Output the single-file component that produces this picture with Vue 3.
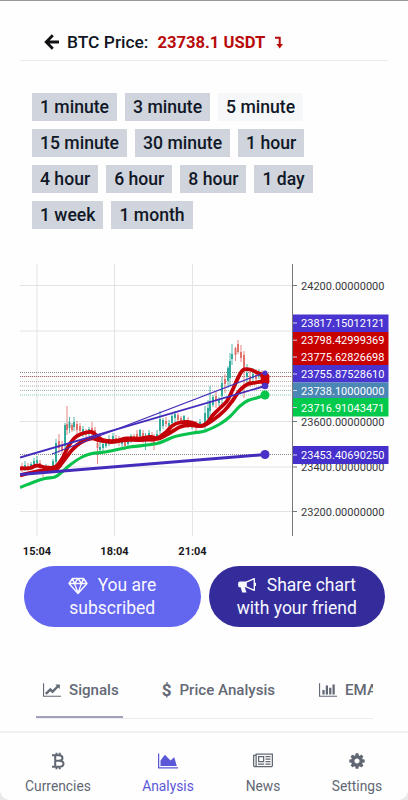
<template>
  <div class="screen">
    <header class="header">
      <svg class="back" viewBox="0 0 16 16"><path d="M8.8 1.2 2.2 8l6.600 6.800M2.400 8H15" /></svg>
      <span class="pair">BTC Price:</span>
      <span class="price">23738.1 USDT</span>
      <svg class="down" viewBox="0 0 10 13">
        <path d="M1 1.700H5.700V9" />
        <polygon points="2.400,8 9,8 5.700,12.600" />
      </svg>
    </header>

    <!-- timeframes -->
    <div class="frames">
      <div v-for="(row, i) in frames" :key="i" class="frame-row">
        <button v-for="f in row" :key="f" class="frame" :class="{ active: frame === f }" @click="frame = f">{{ f }}</button>
      </div>
    </div>

    <!-- chart -->
    <svg class="chart" viewBox="20 264 372 296">
      <defs>
        <clipPath id="plot"><rect x="20" y="264" width="272" height="272" /></clipPath>
      </defs>
      <g class="grid">
        <line v-for="t in times" :key="t.x" :x1="t.x" :x2="t.x" y1="264" y2="536" />
        <line v-for="y in gridY" :key="y" x1="20" x2="292" :y1="y" :y2="y" />
      </g>
      <line v-for="l in levels" :key="l.y" class="level" x1="20" x2="292" :y1="l.y" :y2="l.y" :stroke="l.color" />

      <g clip-path="url(#plot)">
        <g v-for="c in candles" :key="c[0]" :fill="c[5] ? '#26a69a' : '#df6a65'">
          <rect :x="c[0] - 0.4" :y="c[1]" width="0.8" :height="c[2] - c[1]" />
          <rect :x="c[0] - 0.9" :y="c[3]" width="1.8" :height="c[4] - c[3]" />
        </g>
        <path class="green" :d="curve(slow)" />
        <path class="red" :d="curve(fast)" />
        <path class="red" :d="curve(medium)" />
        <g class="trend">
          <line x1="20" y1="457.500" x2="265" y2="386" stroke-width="1.9" />
          <line x1="52" y1="454" x2="265" y2="372.500" stroke-width="1.200" />
          <line x1="20" y1="474.500" x2="265" y2="454.500" stroke-width="3" />
        </g>
      </g>
      <g fill="#cb0008">
        <circle cx="265" cy="377" r="4.6" />
        <circle cx="265" cy="381" r="4.6" />
      </g>
      <g fill="#4a32c8">
        <circle cx="265" cy="373" r="2.500" />
        <circle cx="265" cy="386" r="3.300" />
        <circle cx="265" cy="454.5" r="4.500" />
      </g>
      <circle cx="265" cy="395" r="4.500" fill="#05c54b" />

      <line class="axis" x1="292.5" x2="292.5" y1="264" y2="536" />
      <g class="scale">
        <g v-for="s in scale" :key="s.text">
          <line x1="293" x2="297" :y1="s.y" :y2="s.y" />
          <text x="301" :y="s.y + 4" textLength="83.5">{{ s.text }}</text>
        </g>
      </g>
      <g v-for="t in tags" :key="t.text" class="tag">
        <rect x="293" :y="t.top" width="95.500" :height="t.bottom - t.top" :fill="t.color" />
        <line x1="293" x2="297" :y1="t.y" :y2="t.y" />
        <text x="301" :y="t.y + 4" textLength="83.5">{{ t.text }}</text>
      </g>
      <text v-for="t in times" :key="t.label" class="time" :x="t.x" y="554.5">{{ t.label }}</text>
    </svg>

    <div class="actions">
      <button class="action subscribed">
        <svg viewBox="0 0 20 18"><path d="M4.500 1.500h11l3.500 5-9 10-9-10zM1 6.500h18M6.500 6.500 10 16l3.500-9.500L10 1.500zM4.500 1.500l2 5M15.500 1.500l-2 5" /></svg>
        You are<br>subscribed
      </button>
      <button class="action share">
        <svg viewBox="0 0 20 18">
          <path d="M9.300 5.200 17.300 1.700v11.600L9.300 9.800M18.300 5.800v3.200" />
          <path class="solid" d="M2.500 4.500h7.300v5.800H7.800l1.700 5.200H5.200L3.600 10.300H2.500Q1 10 1 7.400t1.500-2.900z" />
        </svg>
        Share chart<br>with your friend
      </button>
    </div>

    <!-- analysis tabs -->
    <div class="tabs">
      <div class="tab active">
        <svg class="wide" viewBox="0 0 2048 1792"><path :d="icons.line" /></svg>Signals
      </div>
      <div class="tab price-tab"><b>$</b>Price Analysis</div>
      <div class="tab">
        <svg class="wide" viewBox="0 0 2048 1792"><path :d="icons.bars" /></svg>EMA
      </div>
    </div>

    <nav class="nav">
      <a class="nav-item currencies">
        <svg class="coin" viewBox="0 0 14 18"><path d="M1 3.200h7q3.500.2 3.500 2.700T8 8.700H4.200M8 8.700q4.500.1 4.500 3T8 14.800H1M4.200 3.200v11.600M5.500.7v2.500M8.700.7v2.500M5.500 14.800v2.500M8.700 14.800v2.500" /></svg>
        Currencies
      </a>
      <a class="nav-item analysis active">
        <svg viewBox="0 0 2048 1792"><path :d="icons.area" /></svg>
        Analysis
      </a>
      <a class="nav-item news">
        <svg viewBox="0 0 2048 1792"><path :d="icons.news" /></svg>
        News
      </a>
      <a class="nav-item settings">
        <svg viewBox="0 0 1792 1792"><path :d="icons.cog" /></svg>
        Settings
      </a>
    </nav>
  </div>
</template>

<script setup>
import { ref } from 'vue'

const frame = ref('5 minute')
const frames = [
  ['1 minute', '3 minute', '5 minute'],
  ['15 minute', '30 minute', '1 hour'],
  ['4 hour', '6 hour', '8 hour', '1 day'],
  ['1 week', '1 month']
]

const times = [
  { x: 37, label: '15:04' },
  { x: 114.5, label: '18:04' },
  { x: 192.5, label: '21:04' }
]
const gridY = [285.5, 331, 376.5, 421.5, 467, 511.5]
const levels = [
  { y: 372.5, color: '#8b8089' },
  { y: 376.5, color: '#ad676c' },
  { y: 381.5, color: '#c2b2b0' },
  { y: 386, color: '#aaa' },
  { y: 390.5, color: '#9fb5b0' },
  { y: 395, color: '#83ceae' },
  { y: 454.5, color: '#888' }
]
const scale = [
  { y: 285.5, text: '24200.00000000' },
  { y: 421.5, text: '23600.00000000' },
  { y: 467, text: '23400.00000000' },
  { y: 511.5, text: '23200.00000000' }
]
const tags = [
  { y: 323, top: 314.5, bottom: 332, text: '23817.15012121', color: '#4934d0' },
  { y: 340.2, top: 332, bottom: 349, text: '23798.42999369', color: '#c70000' },
  { y: 357, top: 349, bottom: 365, text: '23775.62826698', color: '#c70000' },
  { y: 374, top: 365, bottom: 382.5, text: '23755.87528610', color: '#4934d0' },
  { y: 390.5, top: 382.5, bottom: 398, text: '23738.10000000', color: '#4b87b4' },
  { y: 407.5, top: 398, bottom: 416.5, text: '23716.91043471', color: '#00ca4b' },
  { y: 455, top: 446, bottom: 464, text: '23453.40690250', color: '#4530cb' }
]

// moving averages
const fast = [
  [20, 468.5], [30, 468], [37, 465.5], [46, 467.5], [55, 467], [62, 459], [68, 447], [74, 438.5],
  [80, 434.5], [91, 432], [97, 436], [103, 440], [115, 441], [126, 438.5], [140, 438.5], [150, 437],
  [157, 438], [165, 433], [172, 426], [180, 422.5], [192, 422.5], [200, 426], [207, 423], [213, 415],
  [220, 408], [227, 401], [233, 389], [238, 378], [243, 370], [250, 369.5], [258, 373], [265, 375.5]
]
const medium = [
  [20, 475.5], [36, 471.5], [55, 469.5], [62, 463], [72, 450], [80, 443], [91, 438.5], [100, 440.5],
  [112, 442], [126, 440], [140, 440], [157, 439], [168, 434], [180, 427], [190, 425], [202, 426],
  [213, 420], [225, 410], [233, 400], [240, 390], [248, 384], [256, 382.5], [265, 381]
]
const slow = [
  [20, 487.5], [34, 482], [45, 478.5], [55, 477], [62, 472], [70, 465], [82, 457], [92, 453.5],
  [105, 452], [130, 447], [157, 443.5], [175, 436.5], [193, 433], [205, 431], [220, 424], [230, 416.500],
  [240, 406], [248, 400.5], [258, 397.5], [265, 395]
]

// smooth path through the points
function curve(pts) {
  let d = `M${pts[0]}`
  for (let i = 0; i < pts.length - 1; i++) {
    const a = pts[i - 1] || pts[i]
    const b = pts[i]
    const c = pts[i + 1]
    const e = pts[i + 2] || c
    d += `C${b[0] + (c[0] - a[0]) / 6} ${b[1] + (c[1] - a[1]) / 6} ${c[0] - (e[0] - b[0]) / 6} ${c[1] - (e[1] - b[1]) / 6} ${c[0]} ${c[1]}`
  }
  return d
}

// x, high, low, body top, body bottom, rising
const candles = [
  [22, 463, 472, 466, 469, 0], [25, 461, 471, 465, 469, 1], [28, 463, 471, 466, 468, 0],
  [31, 462, 470, 464, 468, 1], [34, 458, 468, 461, 466, 1], [37, 456, 466, 460, 463, 1],
  [40, 460, 471, 463, 467, 0], [43, 465, 477, 467, 470, 0], [46, 464, 473, 467, 469, 1],
  [49, 465, 472, 467, 470, 0], [53, 459, 470, 461, 468, 1], [56, 439, 465, 443, 462, 1],
  [59, 434, 453, 441, 448, 0], [62, 441, 454, 445, 451, 0], [65, 423, 450, 425, 446, 1],
  [67, 406, 435, 424, 430, 0], [69.5, 417, 433, 422, 428, 1], [72, 423, 432, 425, 430, 0],
  [74, 417, 431, 422, 427, 1], [77, 421, 435, 424, 430, 0], [80, 423, 434, 426, 431, 0],
  [83, 426, 437, 429, 433, 1], [86, 429, 437, 431, 435, 0], [89, 427, 436, 429, 434, 1],
  [92, 422, 436, 428, 433, 0], [95, 427, 440, 430, 437, 0], [97.5, 434, 464, 443, 448, 0],
  [100, 440, 454, 447, 450, 1], [103, 440, 453, 444, 448, 1], [106, 440, 448, 442, 446, 1],
  [109, 435, 446, 439, 444, 1], [113, 433, 444, 436, 441, 1], [116, 435, 444, 438, 442, 0],
  [119, 436, 446, 439, 443, 0], [122, 438, 447, 440, 444, 1], [125, 438, 450, 441, 446, 0],
  [128, 437, 447, 440, 444, 1], [131, 434, 443, 436, 440, 1], [134, 434, 442, 436, 439, 0],
  [137, 430, 440, 434, 438, 0], [140, 429, 437, 430, 436, 1], [143, 430, 443, 433, 440, 0],
  [145.5, 433, 450, 437, 441, 1], [149, 430, 441, 433, 438, 1], [152, 432, 444, 435, 439, 0],
  [154, 434, 450, 437, 444, 0], [157, 430, 440, 434, 438, 1], [160, 411, 434, 419, 431, 1],
  [163, 418, 429, 420, 426, 1], [166, 417, 427, 421, 424, 0], [169, 420, 429, 423, 426, 1],
  [172, 414, 425, 416, 423, 1], [175, 411, 422, 414, 418, 1], [178, 413, 424, 415, 420, 0],
  [181, 416, 427, 418, 424, 0], [184, 415, 423, 416, 420, 1], [188, 417, 428, 420, 425, 0],
  [192, 421, 429, 423, 427, 1], [196, 421, 434, 424, 427, 0], [200, 419, 428, 422, 426, 1],
  [205, 406, 429, 413, 425, 1], [208, 400, 421, 408, 418, 1], [210, 386, 416, 401, 411, 1],
  [213, 395, 407, 397, 405, 1], [216, 392, 408, 396, 400, 0], [219, 397, 406, 399, 403, 1],
  [222, 377, 405, 383, 396, 1], [225, 374, 393, 379, 384, 0], [228, 366, 388, 368, 381, 1],
  [230, 353, 386, 361, 378, 1], [232, 344, 365, 354, 359, 1], [235.5, 347, 361, 348, 355, 0],
  [238, 340, 354, 344, 352, 0], [241, 345, 362, 352, 358, 0], [244, 351, 398, 355, 371, 0],
  [247, 364, 384, 373, 377, 1], [250, 371, 387, 377, 383, 0], [253, 368, 382, 374, 378, 1],
  [256, 369, 383, 375, 379, 0], [259, 369, 379, 372, 376, 1], [262, 370, 380, 373, 377, 0]
]

const icons = {
  line: 'M2048 1536v128h-2048v-1536h128v1408h1920zm-128-1248v435q0 21-19.5 29.5t-35.5-7.5l-121-121-633 633q-10 10-23 10t-23-10l-233-233-416 416-192-192 585-585q10-10 23-10t23 10l233 233 464-464-121-121q-16-16-7.5-35.5t29.5-19.5h435q14 0 23 9t9 23z',
  bars: 'M640 896v512h-256v-512h256zm384-512v1024h-256v-1024h256zm1024 1152v128h-2048v-1536h128v1408h1920zm-640-896v768h-256v-768h256zm384-384v1152h-256v-1152h256z',
  area: 'M2048 1536v128h-2048v-1536h128v1408h1920zm-384-1024l256 896h-1664v-576l448-576 576 576z',
  news: 'M1024 512h-384v384h384v-384zm128 640v128h-640v-128h640zm0-768v640h-640v-640h640zm640 768v128h-512v-128h512zm0-256v128h-512v-128h512zm0-256v128h-512v-128h512zm0-256v128h-512v-128h512zm-1536 960v-960h-128v960q0 26 19 45t45 19 45-19 19-45zm1664 0v-1088h-1536v1088q0 33-11 64h1483q26 0 45-19t19-45zm128-1216v1216q0 80-56 136t-136 56h-1664q-80 0-136-56t-56-136v-1088h256v-128h1792z',
  cog: 'M1152 896q0-106-75-181t-181-75-181 75-75 181 75 181 181 75 181-75 75-181zm512-109v222q0 12-8 23t-20 13l-185 28q-19 54-39 91 35 50 107 138 10 12 10 25t-9 23q-27 37-99 108t-94 71q-12 0-26-9l-138-108q-44 23-91 38-16 136-29 186-7 28-36 28h-222q-14 0-24.5-8.5t-11.5-21.5l-28-184q-49-16-90-37l-141 107q-10 9-25 9-14 0-25-11-126-114-165-168-7-10-7-23 0-12 8-23 15-21 51-66.5t54-70.5q-27-50-41-99l-183-27q-13-2-21-12.5t-8-23.5v-222q0-12 8-23t19-13l186-28q14-46 39-92-40-57-107-138-10-12-10-24 0-10 9-23 26-36 98.5-107.5t94.5-71.5q13 0 26 10l138 107q44-23 91-38 16-136 29-186 7-28 36-28h222q14 0 24.5 8.5t11.5 21.5l28 184q49 16 90 37l142-107q9-9 24-9 13 0 25 10 129 119 165 170 7 8 7 22 0 12-8 23-15 21-51 66.5t-54 70.5q26 50 41 98l183 28q13 2 21 12.5t8 23.5z'
}
</script>

<style>
body { background: #e9e9eb; }
</style>

<style scoped>
.screen { width: 408px; height: 800px; box-sizing: border-box; display: flex; flex-direction: column; overflow: hidden; background: #fefefe; border-top: 1px solid #98989a; border-radius: 0 0 10px 10px; font-family: Roboto, sans-serif; color: #101623; }
button { border: 0; margin: 0; font-family: inherit; cursor: pointer; }
svg { flex: none; }

.header { height: 60px; margin: 0 20px; padding: 23px 0 0 24px; box-sizing: border-box; border-bottom: 1px solid #ebebed; display: flex; align-items: center; font-size: 17.4px; font-weight: 500; white-space: nowrap; }
.back { width: 16px; height: 16px; margin-right: 7px; fill: none; stroke: #101114; stroke-width: 2.8; }
.price { margin-left: 9px; color: #b80b0b; font-weight: 700; font-size: 16.6px; }
.down { width: 10px; height: 13px; margin-left: 9px; fill: #b80b0b; }
.down path { fill: none; stroke: #b80b0b; stroke-width: 2; }

.frames { height: 203px; box-sizing: border-box; padding: 32px 0 0 32px; display: flex; flex-direction: column; gap: 8px; }
.frame-row { display: flex; gap: 8px; height: 28px; }
.frame { height: 28px; padding: 0 8px; background: #d0d4dc; color: #101827; font-size: 17.6px; line-height: 27px; font-weight: 500; white-space: nowrap; }
.frame.active { background: #f5f7f9; }

.chart { display: block; width: 372px; height: 296px; margin-left: 20px; font-family: Roboto, sans-serif; }
.grid line { stroke: #e3e3e4; stroke-width: 1; }
.level { stroke-width: 1; stroke-dasharray: 1 1; }
.axis { stroke: #77777a; stroke-width: 1; }
.green, .red { fill: none; stroke-linejoin: round; }
.green { stroke: #08c24c; stroke-width: 3.1; }
.red { stroke: #c30007; stroke-width: 3.8; }
.trend line { stroke: #432bbb; }
.scale line { stroke: #777; }
.scale text { font-size: 11px; fill: #38383b; }
.tag line { stroke: #d6d4ed; }
.tag text { font-size: 11px; fill: #fff; }
.time { font-size: 11px; font-weight: 700; text-anchor: middle; fill: #18181b; }

.actions { height: 67px; box-sizing: border-box; padding: 6px 23px 0 24px; display: flex; gap: 8px; }
.action { flex: 1; height: 61px; padding: 0; border-radius: 31px; color: #f8f8ff; font-size: 17.5px; line-height: 22.5px; white-space: nowrap; }
.action svg { width: 20px; height: 18px; margin-right: 5px; vertical-align: -4px; fill: none; stroke: currentColor; stroke-width: 1.4; stroke-linejoin: round; }
.action .solid { fill: currentColor; stroke: none; }
.subscribed { background: #6366ef; }
.share { background: #352c9c; }

.tabs { margin: 34px 35px 0 36px; height: 58px; box-sizing: border-box; border-bottom: 1px solid #ececef; display: flex; overflow: hidden; color: #636975; font-size: 15.1px; font-weight: 500; white-space: nowrap; }
.tab { flex: none; display: flex; align-items: center; height: 57px; padding: 4px 4px 2px 7px; margin-right: 33px; box-sizing: border-box; border-bottom: 2px solid transparent; }
.tab.active { border-bottom-color: #a0a2bd; }
.tab .wide { width: 18px; height: 16px; margin-right: 8px; fill: currentColor; }
.price-tab { padding-left: 6px; }
.price-tab b { font-size: 17px; margin-right: 8px; }

.nav { margin-top: auto; height: 69px; box-sizing: border-box; border-top: 2px solid #f1f1f2; display: flex; color: #626873; font-size: 13.8px; }
.nav-item { display: flex; flex-direction: column; align-items: center; gap: 8px; padding-top: 19px; line-height: 16px; }
.nav-item svg { width: 20px; height: 18px; fill: currentColor; }
.nav-item .coin { width: 14px; fill: none; stroke: currentColor; stroke-width: 2; }
.nav-item.active { color: #5b58d8; }
.currencies { width: 116px; }
.analysis { width: 104px; }
.news { width: 86px; }
.settings { width: 102px; }
</style>
